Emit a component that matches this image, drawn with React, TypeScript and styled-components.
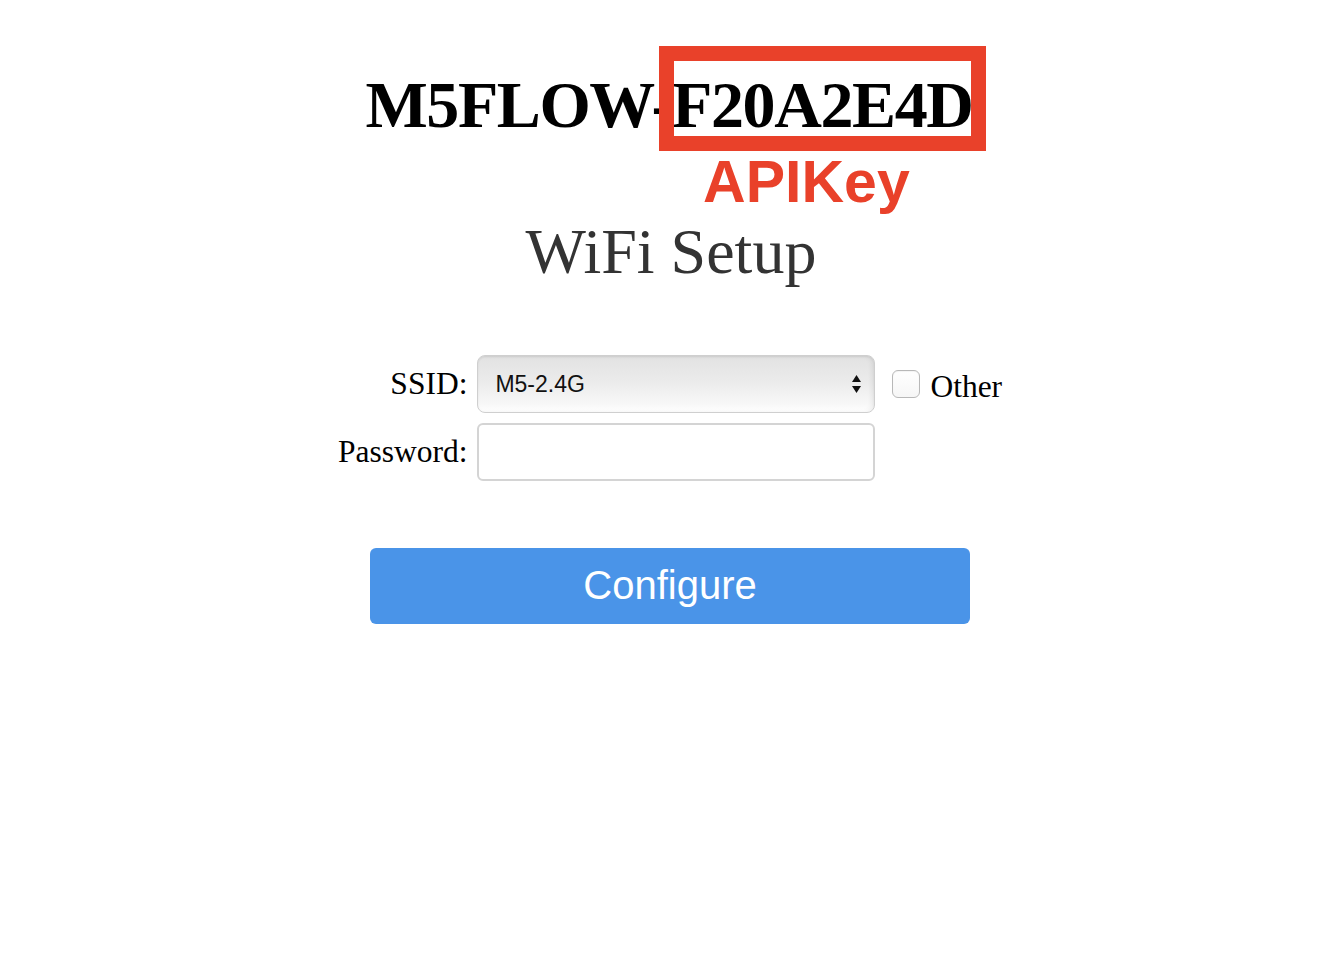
import React from "react";
import styled, { createGlobalStyle } from "styled-components";

const GlobalStyle = createGlobalStyle`
  html, body { margin: 0; padding: 0; background: #ffffff; }
  body { font-family: "Liberation Serif", "Times New Roman", serif; color: #000; }
  * { box-sizing: border-box; }
`;

const Page = styled.main`
  display: flex;
  flex-direction: column;
  align-items: center;
  padding-top: 68px;
  min-height: 972px;
`;

const Title = styled.h1`
  margin: 0 4px 0 0;
  font-family: "Liberation Serif", "Times New Roman", serif;
  font-weight: 700;
  font-size: 66px;
  line-height: 74px;
  letter-spacing: -1.4px;
  white-space: nowrap;
`;

const KeyPart = styled.span`
  position: relative;
`;

const Highlight = styled.span`
  position: absolute;
  left: -13px;
  right: -13px;
  top: -22px;
  bottom: -10px;
  border: 15px solid #e9412a;
  pointer-events: none;
`;

const KeyLabel = styled.span`
  position: absolute;
  left: 31px;
  top: calc(100% + 12px);
  font-family: "Liberation Sans", Arial, sans-serif;
  font-weight: 700;
  font-size: 59px;
  line-height: 59px;
  letter-spacing: 0;
  color: #e9412a;
`;

const Subtitle = styled.h2`
  margin: 73px 0 0;
  font-family: "Liberation Serif", "Times New Roman", serif;
  font-weight: 400;
  font-size: 64px;
  line-height: 74px;
  color: #333333;
  white-space: nowrap;
`;

const Form = styled.form`
  display: flex;
  flex-direction: column;
  align-items: center;
  margin-top: 66px;
`;

const Fields = styled.div`
  display: grid;
  grid-template-columns: auto 398px auto;
  grid-template-rows: 58px 58px;
  column-gap: 10px;
  row-gap: 10px;
  align-items: center;
  margin-right: 2px;
`;

const Label = styled.label`
  font-family: "Liberation Serif", "Times New Roman", serif;
  font-size: 31.5px;
  line-height: 36px;
  text-align: right;
  white-space: nowrap;
`;

const SelectWrap = styled.div`
  position: relative;
  height: 58px;
`;

const Select = styled.select`
  appearance: none;
  -webkit-appearance: none;
  width: 100%;
  height: 100%;
  margin: 0;
  padding: 0 40px 0 17px;
  border: 1.5px solid #cfcfcf;
  border-radius: 8px;
  background: linear-gradient(to bottom, #e2e2e2 0%, #ebebeb 45%, #f7f7f7 85%, #ffffff 100%);
  box-shadow: inset 0 1px 2px rgba(0, 0, 0, 0.08), inset -3px 0 4px rgba(0, 0, 0, 0.05);
  font-family: "Liberation Sans", Arial, sans-serif;
  font-size: 23px;
  color: #111;
  outline: none;
`;

const Arrows = styled.svg`
  position: absolute;
  right: 13px;
  top: 50%;
  transform: translateY(-50%);
  width: 11px;
  height: 20px;
  pointer-events: none;
`;

const Input = styled.input`
  width: 100%;
  height: 58px;
  margin: 0;
  border: 2px solid #d4d4d4;
  border-radius: 6px;
  background: #ffffff;
  font-size: 22px;
  padding: 0 14px;
  outline: none;
`;

const CheckCell = styled.div`
  display: flex;
  align-items: center;
  gap: 10px;
  padding-left: 7px;
`;

const Check = styled.input`
  appearance: none;
  -webkit-appearance: none;
  width: 28px;
  height: 28px;
  margin: 0;
  border: 1.5px solid #b8b8b8;
  border-radius: 6px;
  background: linear-gradient(to bottom, #ffffff, #f6f6f6);
  box-shadow: inset 0 1px 1px rgba(0, 0, 0, 0.05);
`;

const CheckText = styled.span`
  font-family: "Liberation Serif", "Times New Roman", serif;
  font-size: 31.5px;
  line-height: 36px;
  margin-top: 6px;
`;

const Button = styled.button`
  margin-top: 67px;
  margin-right: 2px;
  width: 600px;
  height: 76px;
  border: none;
  border-radius: 6px;
  background: #4a94e8;
  color: #ffffff;
  font-family: "Liberation Sans", Arial, sans-serif;
  font-size: 40px;
  display: flex;
  align-items: center;
  justify-content: center;
  padding: 0 0 2px;
  cursor: pointer;
`;

export default function App() {
  return (
    <>
      <GlobalStyle />
      <Page>
        <Title>
          M5FLOW-
          <KeyPart>
            F20A2E4D
            <Highlight />
            <KeyLabel>APIKey</KeyLabel>
          </KeyPart>
        </Title>
        <Subtitle>WiFi Setup</Subtitle>
        <Form onSubmit={(e) => e.preventDefault()}>
          <Fields>
            <Label htmlFor="ssid">SSID:</Label>
            <SelectWrap>
              <Select id="ssid" defaultValue="M5-2.4G">
                <option value="M5-2.4G">M5-2.4G</option>
              </Select>
              <Arrows viewBox="0 0 11 20">
                <path d="M5.5 1 L10 8 L1 8 Z" fill="#111" />
                <path d="M1 12 L10 12 L5.5 19 Z" fill="#111" />
              </Arrows>
            </SelectWrap>
            <CheckCell>
              <Check type="checkbox" id="other" />
              <CheckText>Other</CheckText>
            </CheckCell>
            <Label htmlFor="pwd">Password:</Label>
            <Input id="pwd" type="password" />
            <span />
          </Fields>
          <Button type="submit">Configure</Button>
        </Form>
      </Page>
    </>
  );
}
